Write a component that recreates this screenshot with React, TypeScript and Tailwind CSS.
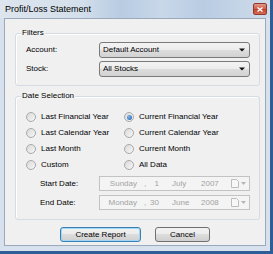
import React from 'react'

const font = "font-['Liberation_Sans',Arial,sans-serif]"

const Radio = ({ checked = false }: { checked?: boolean }) => (
  <div className="w-[10px] h-[10px] rounded-full border border-[#a9a9a9] bg-gradient-to-br from-[#d9d9d9] to-[#f7f7f7] flex items-center justify-center shrink-0">
    {checked && <div className="w-[5px] h-[5px] rounded-full bg-[radial-gradient(circle_at_35%_35%,#7fb2e8,#1f5fa8)]" />}
  </div>
)

const RadioItem = ({ label, checked }: { label: string; checked?: boolean }) => (
  <div className="flex items-center gap-[5px] h-[16px]">
    <Radio checked={checked} />
    <span className="text-[8px] leading-none text-black">{label}</span>
  </div>
)

const Combo = ({ value }: { value: string }) => (
  <div className="w-[151px] h-[16px] rounded-[3px] border border-[#7a7a7a] bg-[linear-gradient(#f3f3f3,#ececec_50%,#dddddd_50%,#d2d2d2)] flex items-center pl-[3px] pr-[4px]">
    <span className="text-[8px] leading-none text-black">{value}</span>
    <svg className="ml-auto" width="6" height="4" viewBox="0 0 6 4">
      <path d="M0 0.5h6L3 3.5z" fill="#111" />
    </svg>
  </div>
)

const DatePicker = ({ day, num, month, year }: { day: string; num: string; month: string; year: string }) => (
  <div className="w-[151px] h-[15px] border border-[#c3c3c3] bg-[#f4f4f4] flex items-center text-[8px] leading-none text-[#a3a3a3]">
    <span className="w-[37px] text-right">{day}</span>
    <span className="w-[7px]" />
    <span className="w-[4px]">,</span>
    <span className="w-[11px] text-right">{num}</span>
    <span className="w-[13px]" />
    <span className="w-[29px]">{month}</span>
    <span className="w-[30px]">{year}</span>
    <svg width="8" height="9" viewBox="0 0 8 9">
      <path d="M0.5 0.5h5l2 2v6h-7z" fill="#f7f7f7" stroke="#bdbdbd" />
    </svg>
    <svg className="ml-[2px]" width="5" height="3" viewBox="0 0 5 3">
      <path d="M0 0h5L2.5 3z" fill="#b5b5b5" />
    </svg>
  </div>
)

const GroupBox = ({ title, className = '', children }: { title: string; className?: string; children: React.ReactNode }) => (
  <div className={`relative border border-[#d3dbe3] rounded-[3px] shadow-[inset_1px_1px_0_#ffffff] ${className}`}>
    <span className="absolute left-[5px] top-[-5px] px-[1px] bg-[#f0f0f0] text-[8px] leading-none text-black">{title}</span>
    {children}
  </div>
)

export default function App() {
  return (
    <div className={`w-[273px] h-[254px] flex flex-col bg-[#d6e1ed] border-r-[3px] border-b-[3px] border-[#2f5d96] ${font}`}>
      {/* Title bar */}
      <div className="h-[18px] flex items-center pl-[5px] pr-[3px] bg-[linear-gradient(90deg,#dde5ee_0%,#d3dfeb_30%,#b7cbe2_45%,#c9d8e9_60%,#b9cce3_75%,#cfdcea_100%)]">
        <span className="text-[9px] leading-none text-black">Profit/Loss Statement</span>
        <div className="ml-auto w-[14px] h-[12px] rounded-[2px] border border-[#8e3a2e] bg-[linear-gradient(#e29a89,#cf5a45_50%,#bf3f2b_50%,#d76b52)] flex items-center justify-center">
          <svg width="6" height="5" viewBox="0 0 6 5">
            <path d="M0.5 0.5l5 4M5.5 0.5l-5 4" stroke="#fff" strokeWidth="1.4" />
          </svg>
        </div>
      </div>

      <div className="flex flex-1 px-[4px] pb-[5px]">
        <div className="flex-1 bg-[#f0f0f0] border border-[#9aa9bb] flex flex-col">
          {/* Filters */}
          <GroupBox title="Filters" className="ml-[10px] mt-[14px] w-[245px] pl-[10px] pt-[8px] pb-[8px]">
            <div className="flex items-center h-[16px]">
              <span className="w-[73px] text-[8px] leading-none text-black">Account:</span>
              <Combo value="Default Account" />
            </div>
            <div className="flex items-center h-[16px] mt-[3px]">
              <span className="w-[73px] text-[8px] leading-none text-black">Stock:</span>
              <Combo value="All Stocks" />
            </div>
          </GroupBox>

          {/* Date Selection */}
          <GroupBox title="Date Selection" className="ml-[10px] mt-[10px] w-[245px] pl-[10px] pt-[12px] pb-[9px]">
            <div className="grid grid-cols-[98px_1fr]">
              <RadioItem label="Last Financial Year" />
              <RadioItem label="Current Financial Year" checked />
              <RadioItem label="Last Calendar Year" />
              <RadioItem label="Current Calendar Year" />
              <RadioItem label="Last Month" />
              <RadioItem label="Current Month" />
              <RadioItem label="Custom" />
              <RadioItem label="All Data" />
            </div>
            <div className="flex items-center mt-[3px] pl-[14px]">
              <span className="w-[59px] text-[8px] leading-none text-black">Start Date:</span>
              <DatePicker day="Sunday" num="1" month="July" year="2007" />
            </div>
            <div className="flex items-center mt-[4px] pl-[14px]">
              <span className="w-[59px] text-[8px] leading-none text-black">End Date:</span>
              <DatePicker day="Monday" num="30" month="June" year="2008" />
            </div>
          </GroupBox>

          {/* Buttons */}
          <div className="flex justify-center gap-[14px] mt-[7px]">
            <button className="w-[81px] h-[15px] rounded-[3px] border border-[#3c7fb1] shadow-[inset_0_0_0_1px_#9fd5f6] bg-[linear-gradient(#f2f2f2,#ebebeb_50%,#dddddd_50%,#cfcfcf)] text-[8px] leading-none text-black">
              Create Report
            </button>
            <button className="w-[55px] h-[15px] rounded-[3px] border border-[#707070] bg-[linear-gradient(#f2f2f2,#ebebeb_50%,#dddddd_50%,#cfcfcf)] text-[8px] leading-none text-black">
              Cancel
            </button>
          </div>
        </div>
      </div>
    </div>
  )
}
